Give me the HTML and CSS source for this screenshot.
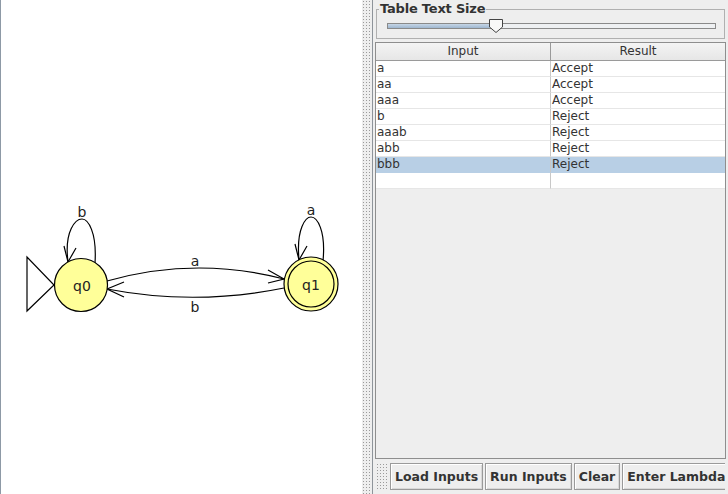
FILE: index.html
```html
<!DOCTYPE html>
<html>
<head>
<meta charset="utf-8">
<link rel="stylesheet" href="styles.css">
</head>
<body>
<div class="app">
  <div class="canvas">
    <svg width="361" height="494" viewBox="1 0 361 494" xmlns="http://www.w3.org/2000/svg">
      <g fill="none" stroke="#000" stroke-width="1.2">
        <polygon points="27,257 27,311 54,285" fill="#fff"/>
        <path d="M107,281 Q195,256 284,279"/>
        <path d="M268,270 L284,279 L268,283"/>
        <path d="M284,288 Q195,306 107,289"/>
        <path d="M124,282 L107,289 L124,297"/>
        <path d="M68,262 C64,230 76,219 82,219 C88,219 97,232 95,263"/>
        <path d="M64,246 L68,262 L76,248"/>
        <path d="M299,260 C296,228 306,217 311,217 C317,217 326,230 323,261"/>
        <path d="M295,244 L299,260 L307,246"/>
      </g>
      <circle cx="81" cy="285" r="26.5" fill="#ffff99" stroke="#000" stroke-width="1.2"/>
      <circle cx="311" cy="284" r="27" fill="#ffff99" stroke="#000" stroke-width="1.2"/>
      <circle cx="311" cy="284" r="23" fill="none" stroke="#000" stroke-width="1.2"/>
      <g font-family="DejaVu Sans, sans-serif" font-size="14" fill="#222" text-anchor="middle">
        <text x="82" y="291">q0</text>
        <text x="311" y="290">q1</text>
        <text x="195" y="266">a</text>
        <text x="195" y="312">b</text>
        <text x="82" y="217">b</text>
        <text x="311" y="215">a</text>
      </g>
    </svg>
  </div>
  <div class="divider"></div>
  <div class="panel">
    <fieldset class="sizebox">
      <legend class="legend">Table Text Size</legend>
      <div class="slider">
        <div class="track"><div class="fill"></div></div>
        <svg class="thumb" width="16" height="16" viewBox="0 0 16 16">
          <path d="M1.5,1.5 H14.5 V9 L8,14.5 L1.5,9 Z" fill="#f8f8f8" stroke="#444" stroke-width="1"/>
        </svg>
      </div>
    </fieldset>
    <div class="scrollpane">
      <div class="thead">
        <div class="hcell c1">Input</div>
        <div class="hcell c2">Result</div>
      </div>
      <div class="row"><div class="cell c1">a</div><div class="cell c2">Accept</div></div>
      <div class="row"><div class="cell c1">aa</div><div class="cell c2">Accept</div></div>
      <div class="row"><div class="cell c1">aaa</div><div class="cell c2">Accept</div></div>
      <div class="row"><div class="cell c1">b</div><div class="cell c2">Reject</div></div>
      <div class="row"><div class="cell c1">aaab</div><div class="cell c2">Reject</div></div>
      <div class="row"><div class="cell c1">abb</div><div class="cell c2">Reject</div></div>
      <div class="row sel"><div class="cell c1">bbb</div><div class="cell c2">Reject</div></div>
      <div class="row"><div class="cell c1"></div><div class="cell c2"></div></div>
    </div>
    <div class="toolbar">
      <div class="grip"></div>
      <button class="btn">Load Inputs</button>
      <button class="btn">Run Inputs</button>
      <button class="btn">Clear</button>
      <button class="btn">Enter Lambda</button>
    </div>
  </div>
</div>
</body>
</html>
```
FILE: styles.css
```css
* { box-sizing: border-box; }
html, body { margin: 0; padding: 0; }
body {
  width: 728px; height: 494px; overflow: hidden;
  font-family: "DejaVu Sans", sans-serif;
  background: #eeeeee;
}
.app { display: flex; width: 728px; height: 494px; }
.canvas {
  width: 362px; height: 494px; background: #fff;
  border-left: 1px solid #8d99a6;
  flex: none;
}
.canvas svg { display: block; }
.divider {
  width: 11px; flex: none; height: 494px;
  background-color: #eeeeee;
  background-image: radial-gradient(circle, #9a9a9a 0.6px, transparent 0.9px);
  background-size: 3px 3px;
  background-position: 3px 0;
  border-right: 1px solid #8e949a;
}
.panel {
  flex: 1; display: flex; flex-direction: column;
  padding: 0 3px 0 1px; background: #eeeeee; min-width: 0;
}
.sizebox {
  margin: 3px 0 0 2px; padding: 0 8px 0 10px;
  border: 1px solid #b0b0b0; height: 36px; width: 349px;
  position: relative;
}
.legend {
  font-weight: bold; font-size: 13px; color: #333;
  padding: 0 1px; margin-left: -8px; line-height: 12px;
  letter-spacing: -0.2px;
}
.slider { position: relative; height: 20px; margin-top: 3px; }
.track {
  position: absolute; left: 0; right: 0; top: 5px; height: 6px;
  border: 1px solid #8a8a8a; background: #eef0f2;
}
.fill {
  width: 109px; height: 100%;
  background: linear-gradient(#c6d6e6, #9fb7d0);
}
.thumb { position: absolute; left: 101px; top: 0; }
.scrollpane {
  flex: 1; margin-top: 3px; margin-left: 1px;
  border: 1px solid #8e8e8e; background: #eeeeee;
  width: 351px;
}
.thead { display: flex; height: 18px; }
.hcell {
  font-size: 12px; color: #333; text-align: center; line-height: 17px;
  background: linear-gradient(#f4f4f4, #e6e6e6);
  border-right: 1px solid #9a9a9a; border-bottom: 1px solid #9a9a9a;
}
.c1 { width: 175px; }
.c2 { width: 174px; }
.hcell.c2 { border-right: none; }
.row { display: flex; height: 16px; background: #fff; }
.row.sel { background: #b8cfe5; }
.cell {
  font-size: 12px; color: #333; line-height: 15px; padding-left: 1px;
  border-right: 1px solid #c8c8c8; border-bottom: 1px solid #e6e6e6;
  white-space: nowrap;
}
.cell.c2 { border-right: none; }
.row.sel .cell { border-bottom-color: #b8cfe5; }
.toolbar {
  height: 35px; display: flex; align-items: center; gap: 2px;
  padding: 2px 0 3px 2px; overflow: hidden;
}
.grip {
  width: 12px; height: 27px; flex: none;
  background-image: radial-gradient(circle, #9a9a9a 0.6px, transparent 0.9px);
  background-size: 3px 3px;
}
.btn {
  flex: none; height: 27px; padding: 0 4px;
  font-family: "DejaVu Sans", sans-serif; font-weight: bold; font-size: 12.5px;
  color: #333; background: #eeeeee;
  border: 1px solid #9a9a9a; box-shadow: inset 1px 1px 0 #fff, inset -1px -1px 0 #d8d8d8;
  border-radius: 0; white-space: nowrap;
}
```
